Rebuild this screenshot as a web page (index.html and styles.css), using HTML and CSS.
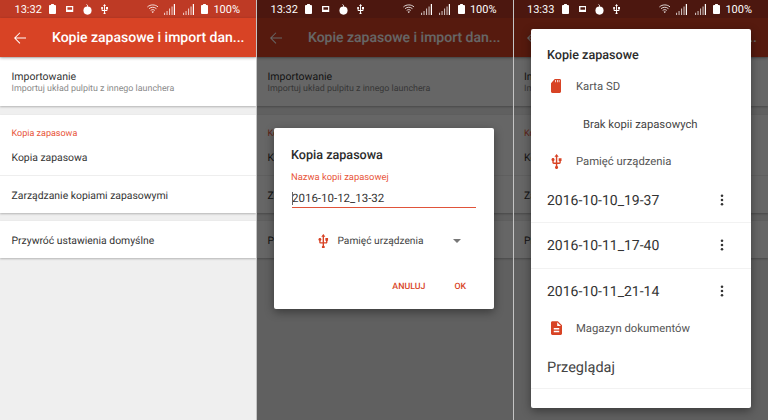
FILE: index.html
```html
<!DOCTYPE html>
<html lang="pl">
<head>
<meta charset="utf-8">
<title>Kopie zapasowe</title>
<link rel="stylesheet" href="styles.css">
</head>
<body>
<svg class="defs" width="0" height="0" aria-hidden="true">
  <symbol id="i-batt" viewBox="7 2 10 20" preserveAspectRatio="none"><path d="M15.670 4H14V2h-4v2H8.330C7.600 4 7 4.600 7 5.330v15.330C7 21.400 7.600 22 8.330 22h7.330c.74 0 1.340-.6 1.340-1.330V5.330C17 4.600 16.400 4 15.670 4z" fill="currentColor"/></symbol>
  <symbol id="i-pic" viewBox="0 0 8 7"><path fill-rule="evenodd" d="M0 0h8v7H0zM1.500 1.300v2.700h5V1.300z" fill="currentColor"/></symbol>
  <symbol id="i-bomb" viewBox="0 0 10 12"><circle cx="5" cy="7.200" r="4.500" fill="currentColor"/><path d="M5 3V1.300L3.800.2" stroke="currentColor" stroke-width="1" fill="none"/></symbol>
  <symbol id="i-usb" viewBox="4.800 1 14.200 21.200"><path d="M15 7v4h1v2h-3V5h2l-3-4-3 4h2v8H8v-2.070c.7-.37 1.200-1.080 1.200-1.930 0-1.210-.99-2.200-2.200-2.200-1.210 0-2.200.99-2.200 2.200 0 .85.5 1.560 1.200 1.930V13c0 1.110.89 2 2 2h3v3.050c-.71.37-1.200 1.100-1.200 1.950 0 1.220.99 2.200 2.200 2.200 1.210 0 2.200-.98 2.200-2.200 0-.85-.49-1.580-1.200-1.950V15h3c1.110 0 2-.89 2-2v-2h1V7h-4z" fill="currentColor"/></symbol>
  <symbol id="i-wifi" viewBox="0 0 14 11"><path d="M.5 3.300C4.200 0 9.800 0 13.500 3.300M2.500 5.400c2.700-2.300 6.300-2.300 9 0M4.500 7.500c1.500-1.200 3.500-1.200 5 0" fill="none" stroke="currentColor" stroke-width="1"/><path d="M7 10.800 5.600 9.200c.8-.6 2-.6 2.800 0z" fill="currentColor"/></symbol>
  <symbol id="i-signal" viewBox="0 0 11 11"><path d="M0 8.800h1.100V11H0zM2.500 7h1.100v4H2.500zM5 4.600h1.100V11H5zM7.500 2.400h1.100V11H7.500z" fill="currentColor" opacity=".7"/><path d="M9.800 0h1.200v11H9.800z" fill="currentColor"/></symbol>
  <symbol id="i-back" viewBox="4 4 16 16"><path d="M20 11.300H6.500l5.900-5.900L11.500 4.500 4 12l7.500 7.500.9-.9-5.900-5.900H20z" fill="currentColor"/></symbol>
  <symbol id="i-sd" viewBox="4 2 16 20" preserveAspectRatio="none"><path d="M18 2h-8L4.020 8 4 20c0 1.100.9 2 2 2h12c1.100 0 2-.9 2-2V4c0-1.100-.9-2-2-2zm-6 4.500h-1.200V3.500H12zm2.800 0h-1.200V3.500h1.200zm2.800 0h-1.200V3.500h1.200z" fill="currentColor"/></symbol>
  <symbol id="i-doc" viewBox="4 2 16 20"><path d="M14 2H6c-1.100 0-1.990.9-1.990 2L4 20c0 1.100.89 2 1.990 2H18c1.100 0 2-.9 2-2V8l-6-6zm2 16H8v-2h8v2zm0-4H8v-2h8v2zm-3-5V3.500L18.500 9H13z" fill="currentColor"/></symbol>
  <symbol id="i-more" viewBox="0 0 4 14"><circle cx="2" cy="2" r="1.500" fill="currentColor"/><circle cx="2" cy="7" r="1.500" fill="currentColor"/><circle cx="2" cy="12" r="1.500" fill="currentColor"/></symbol>
</svg>

<main class="stage">
  <section class="phone phone-a">
    <div class="status">
      <span class="clock">13:32</span>
      <svg class="si si-batt"><use href="#i-batt"/></svg>
      <svg class="si si-pic"><use href="#i-pic"/></svg>
      <svg class="si si-bomb"><use href="#i-bomb"/></svg>
      <svg class="si si-usb"><use href="#i-usb"/></svg>
      <span class="spacer"></span>
      <svg class="si si-wifi"><use href="#i-wifi"/></svg>
      <svg class="si si-signal"><use href="#i-signal"/></svg>
      <svg class="si si-signal"><use href="#i-signal"/></svg>
      <svg class="si si-batt si-batt-r"><use href="#i-batt"/></svg>
      <span class="pct">100%</span>
    </div>
    <header class="appbar">
      <svg class="back"><use href="#i-back"/></svg>
      <h1 class="apptitle">Kopie zapasowe i import dan...</h1>
    </header>
    <div class="content">
      <div class="card card-import">
        <div class="row-title">Importowanie</div>
        <div class="row-sub">Importuj układ pulpitu z innego launchera</div>
      </div>
      <div class="card card-backup">
        <div class="section-label">Kopia zapasowa</div>
        <div class="row row-a">Kopia zapasowa</div>
        <div class="row row-b">Zarządzanie kopiami zapasowymi</div>
      </div>
      <div class="card card-reset">Przywróć ustawienia domyślne</div>
    </div>
  </section>

  <section class="phone phone-b dimmed">
    <div class="status">
      <span class="clock">13:32</span>
      <svg class="si si-batt"><use href="#i-batt"/></svg>
      <svg class="si si-pic"><use href="#i-pic"/></svg>
      <svg class="si si-bomb"><use href="#i-bomb"/></svg>
      <svg class="si si-usb"><use href="#i-usb"/></svg>
      <span class="spacer"></span>
      <svg class="si si-wifi"><use href="#i-wifi"/></svg>
      <svg class="si si-signal"><use href="#i-signal"/></svg>
      <svg class="si si-signal"><use href="#i-signal"/></svg>
      <svg class="si si-batt si-batt-r"><use href="#i-batt"/></svg>
      <span class="pct">100%</span>
    </div>
    <header class="appbar">
      <svg class="back"><use href="#i-back"/></svg>
      <h1 class="apptitle">Kopie zapasowe i import dan...</h1>
    </header>
    <div class="content">
      <div class="card card-import">
        <div class="row-title">Importowanie</div>
        <div class="row-sub">Importuj układ pulpitu z innego launchera</div>
      </div>
      <div class="card card-backup">
        <div class="section-label">Kopia zapasowa</div>
        <div class="row row-a">Kopia zapasowa</div>
        <div class="row row-b">Zarządzanie kopiami zapasowymi</div>
      </div>
      <div class="card card-reset">Przywróć ustawienia domyślne</div>
    </div>
    <div class="scrim"></div>
    <div class="dialog dialog-save">
      <h2 class="dlg-title">Kopia zapasowa</h2>
      <div class="field-label">Nazwa kopii zapasowej</div>
      <div class="field-value"><span class="caret"></span>2016-10-12_13-32</div>
      <div class="picker">
        <svg class="usb-accent"><use href="#i-usb"/></svg>
        <span class="picker-text">Pamięć urządzenia</span>
        <span class="arrow"></span>
      </div>
      <div class="actions">
        <span class="action">ANULUJ</span>
        <span class="action">OK</span>
      </div>
    </div>
  </section>

  <section class="phone phone-c dimmed">
    <div class="status">
      <span class="clock">13:33</span>
      <svg class="si si-batt"><use href="#i-batt"/></svg>
      <svg class="si si-pic"><use href="#i-pic"/></svg>
      <svg class="si si-bomb"><use href="#i-bomb"/></svg>
      <svg class="si si-usb"><use href="#i-usb"/></svg>
      <span class="spacer"></span>
      <svg class="si si-wifi"><use href="#i-wifi"/></svg>
      <svg class="si si-signal"><use href="#i-signal"/></svg>
      <svg class="si si-signal"><use href="#i-signal"/></svg>
      <svg class="si si-batt si-batt-r"><use href="#i-batt"/></svg>
      <span class="pct">100%</span>
    </div>
    <header class="appbar">
      <svg class="back"><use href="#i-back"/></svg>
      <h1 class="apptitle">Kopie zapasowe i import dan...</h1>
    </header>
    <div class="content">
      <div class="card card-import">
        <div class="row-title">Importowanie</div>
        <div class="row-sub">Importuj układ pulpitu z innego launchera</div>
      </div>
      <div class="card card-backup">
        <div class="section-label">Kopia zapasowa</div>
        <div class="row row-a">Kopia zapasowa</div>
        <div class="row row-b">Zarządzanie kopiami zapasowymi</div>
      </div>
      <div class="card card-reset">Przywróć ustawienia domyślne</div>
    </div>
    <div class="scrim"></div>
    <div class="dialog dialog-list">
      <h2 class="dlg-title list-title">Kopie zapasowe</h2>
      <div class="src src-sd"><svg class="src-icon src-icon-sd"><use href="#i-sd"/></svg><span>Karta SD</span></div>
      <div class="empty">Brak kopii zapasowych</div>
      <div class="src src-mem"><svg class="src-icon src-icon-tall"><use href="#i-usb"/></svg><span>Pamięć urządzenia</span></div>
      <div class="bk bk-first bk-line"><span>2016-10-10_19-37</span><svg class="more"><use href="#i-more"/></svg></div>
      <div class="bk bk-line"><span>2016-10-11_17-40</span><svg class="more"><use href="#i-more"/></svg></div>
      <div class="bk"><span>2016-10-11_21-14</span><svg class="more"><use href="#i-more"/></svg></div>
      <div class="src src-doc"><svg class="src-icon"><use href="#i-doc"/></svg><span>Magazyn dokumentów</span></div>
      <div class="browse">Przeglądaj</div>
    </div>
  </section>
</main>
</body>
</html>
```

FILE: styles.css
```css
* { box-sizing: border-box; }
html, body { margin: 0; padding: 0; }
body { width: 768px; height: 420px; overflow: hidden; background: #fff; font-family: Roboto, "Liberation Sans", sans-serif; text-rendering: geometricPrecision; }
.defs { position: absolute; }
.stage { display: flex; width: 768px; height: 420px; }
.phone { position: relative; height: 420px; background: #efefef; overflow: hidden; }
.phone-a { flex: 0 0 256px; }
.phone-b { flex: 0 0 256.500px; }
.phone-c { flex: 0 0 255.500px; }
.dimmed::after { content: ""; position: absolute; left: 0; top: 0; bottom: 0; width: 1px; background: #c4c4c4; z-index: 3; }

.status { display: flex; align-items: center; height: 18px; padding: 0 16px 0 14.500px; background: #be3a25; color: #fff; }
.dimmed .status { position: relative; z-index: 2; background: #4c170f; }
.clock, .pct { font-size: 11px; color: #fff; }
.clock { width: 26.500px; margin-right: 8px; }
.spacer { flex: 1; }
.si { display: block; color: #fff; flex: none; }
.si-batt { width: 7px; height: 10px; margin-right: 10px; }
.si-pic { width: 7.500px; height: 6.500px; margin-right: 9px; }
.si-bomb { width: 9px; height: 11px; margin-right: 9px; }
.si-usb { width: 7px; height: 10.500px; }
.si-wifi { width: 11.500px; height: 9.500px; margin-right: 6px; }
.si-signal { width: 11px; height: 11px; margin-right: 7.500px; }
.si-batt-r { margin-right: 5px; }

.appbar { position: relative; display: flex; align-items: center; height: 39px; padding-left: 14px; background: #d84325; color: #fff; box-shadow: 0 1px 3px rgba(0,0,0,.3); }
.back { width: 12px; height: 12px; color: #fff; margin-right: 26px; flex: none; }
.apptitle { margin: 0; font-size: 14px; font-weight: 500; white-space: nowrap; }

.content { display: flex; flex-direction: column; padding-top: 1px; }
.card { background: #fff; box-shadow: 0 1px 2px rgba(0,0,0,.25); color: #333; }
.card-import { height: 48px; padding: 11.500px 11.500px 0; }
.row-title { font-size: 10.500px; line-height: 13px; }
.row-sub { font-size: 8.900px; line-height: 12px; color: #8a8a8a; margin-top: .5px; }
.card-backup { height: 98px; margin-top: 9px; padding-top: 13px; }
.section-label { font-size: 9px; line-height: 12px; color: #e8553a; padding-left: 11.500px; }
.row { font-size: 10.400px; padding-left: 11.500px; }
.row-a { height: 36px; line-height: 35px; border-bottom: 1px solid #eee; }
.row-b { height: 37px; line-height: 39px; }
.card-reset { height: 37px; margin-top: 8px; font-size: 10.400px; line-height: 40px; padding-left: 11.500px; }

.scrim { position: absolute; inset: 0; background: rgba(0,0,0,.6); }
.dialog { position: absolute; z-index: 2; background: #fff; border-radius: 2px; box-shadow: 0 3px 10px rgba(0,0,0,.4); color: #333; }
.dialog-save { left: 18px; top: 128px; width: 220px; height: 181px; padding: 19.500px 18px 0 17px; }
.dlg-title { margin: 0; font-size: 12.600px; font-weight: 500; color: #2b2b2b; line-height: 15px; }
.field-label { margin-top: 9px; font-size: 9.400px; line-height: 11px; color: #e8553a; }
.field-value { position: relative; height: 18px; margin-top: 7px; margin-left: 1px; font-size: 11.500px; line-height: 17px; color: #333; border-bottom: 1px solid #e0533a; }
.caret { position: absolute; left: 0; top: 2px; width: 1px; height: 13px; background: #666; }
.picker { display: flex; align-items: center; margin-top: 25.500px; padding-left: 27px; height: 16px; }
.usb-accent { width: 10.500px; height: 14.500px; color: #d84325; margin-right: 9px; flex: none; }
.picker-text { font-size: 10.200px; color: #444; width: 115px; white-space: nowrap; flex: none; }
.arrow { width: 0; height: 0; border: 4px solid transparent; border-top: 4.500px solid #777; border-bottom: 0; }
.actions { display: flex; justify-content: flex-end; gap: 29px; margin-top: 32.500px; padding-right: 10px; }
.action { font-size: 8.800px; line-height: 11px; font-weight: 500; color: #d84325; }

.dialog-list { left: 18px; top: 29px; width: 220px; height: 379px; padding-top: 18.500px; }
.list-title { padding-left: 16.500px; margin-bottom: 12.500px; }
.src { display: flex; align-items: center; height: 22px; padding-left: 20px; font-size: 11.300px; color: #555; }
.src-icon { width: 11px; height: 14px; margin-right: 14.500px; flex: none; color: #d84325; }
.src-icon-sd { width: 10px; margin-right: 15.500px; }
.src-icon-tall { height: 15px; }
.empty { height: 55px; line-height: 55px; padding-left: 52.500px; font-size: 11.300px; color: #444; }
.src-mem { height: 18px; }
.bk { display: flex; align-items: center; justify-content: space-between; height: 45.500px; padding: 2px 26.500px 0 16.500px; font-size: 14px; color: #333; }
.bk-first { margin-top: 7.500px; }
.bk-line { border-bottom: 1px solid #f2f2f2; }
.more { width: 4px; height: 12px; color: #333; flex: none; margin-top: -2px; }
.src-doc { height: 28px; }
.browse { height: 47px; line-height: 51px; padding-left: 16.500px; font-size: 14.500px; color: #444; border-bottom: 1px solid #f2f2f2; }
```
